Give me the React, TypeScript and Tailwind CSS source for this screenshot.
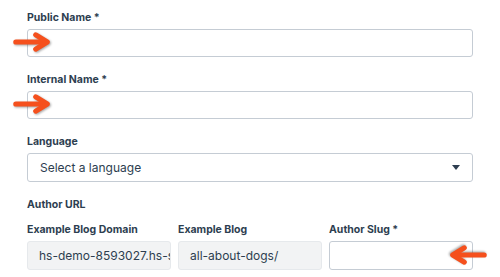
import React from 'react';

const Arrow = ({ flip = false, className = '' }: { flip?: boolean; className?: string }) => (
  <svg
    viewBox="0 0 40 20"
    className={`absolute w-[38px] h-[20px] drop-shadow-[1px_1px_1px_rgba(0,0,0,0.35)] ${flip ? 'rotate-180' : ''} ${className}`}
  >
    <path d="M3 10 H33" stroke="#f5501d" strokeWidth="5.5" strokeLinecap="round" fill="none" />
    <path d="M24 2.5 L36 10 L24 17.5" stroke="#f5501d" strokeWidth="5.5" strokeLinecap="round" strokeLinejoin="round" fill="none" />
  </svg>
);

const Label = ({ children }: { children: React.ReactNode }) => (
  <div className="text-[10.5px] leading-4 font-bold text-[#2d3e50]">{children}</div>
);

const TextInput = () => (
  <div className="h-[28px] w-full rounded-[3px] border border-[#c5ccd4] bg-white" />
);

const App = () => {
  return (
    <div className="relative w-[500px] h-[277px] overflow-hidden bg-white pl-[27px] pr-[27px] pt-[10px] font-['Inter','Noto_Sans',sans-serif] text-[#2d3e50]">
      <div className="flex flex-col gap-[3px]">
        <Label>Public Name *</Label>
        <TextInput />
      </div>

      <div className="mt-[15px] flex flex-col gap-[3px]">
        <Label>Internal Name *</Label>
        <TextInput />
      </div>

      <div className="mt-[15px] flex flex-col gap-[3px]">
        <Label>Language</Label>
        <div className="flex h-[29px] w-full items-center justify-between rounded-[3px] border border-[#c5ccd4] bg-white pl-[12px] pr-[12px]">
          <span className="text-[12px]">Select a language</span>
          <span className="h-0 w-0 border-l-[4px] border-r-[4px] border-t-[5px] border-l-transparent border-r-transparent border-t-[#2d3e50]" />
        </div>
      </div>

      <div className="mt-[15px]">
        <Label>Author URL</Label>
      </div>

      <div className="mt-[9px] grid grid-cols-3 gap-[7px]">
        <div className="flex flex-col gap-[3px] min-w-0">
          <Label>Example Blog Domain</Label>
          <div className="flex h-[29px] items-center overflow-hidden whitespace-nowrap rounded-[3px] border border-[#e6e9ec] bg-[#f2f3f4] pl-[11px] text-[12px]">
            hs-demo-8593027.hs-sites.com/
          </div>
        </div>
        <div className="flex flex-col gap-[3px] min-w-0">
          <Label>Example Blog</Label>
          <div className="flex h-[29px] items-center overflow-hidden whitespace-nowrap rounded-[3px] border border-[#e6e9ec] bg-[#f2f3f4] pl-[11px] text-[12px]">
            all-about-dogs/
          </div>
        </div>
        <div className="flex flex-col gap-[3px] min-w-0">
          <Label>Author Slug *</Label>
          <div className="h-[29px] rounded-[3px] border border-[#c5ccd4] bg-white" />
        </div>
      </div>

      <Arrow className="left-[13px] top-[32px]" />
      <Arrow className="left-[13px] top-[94px]" />
      <Arrow flip className="left-[449px] top-[245px]" />
    </div>
  );
};

export default App;
